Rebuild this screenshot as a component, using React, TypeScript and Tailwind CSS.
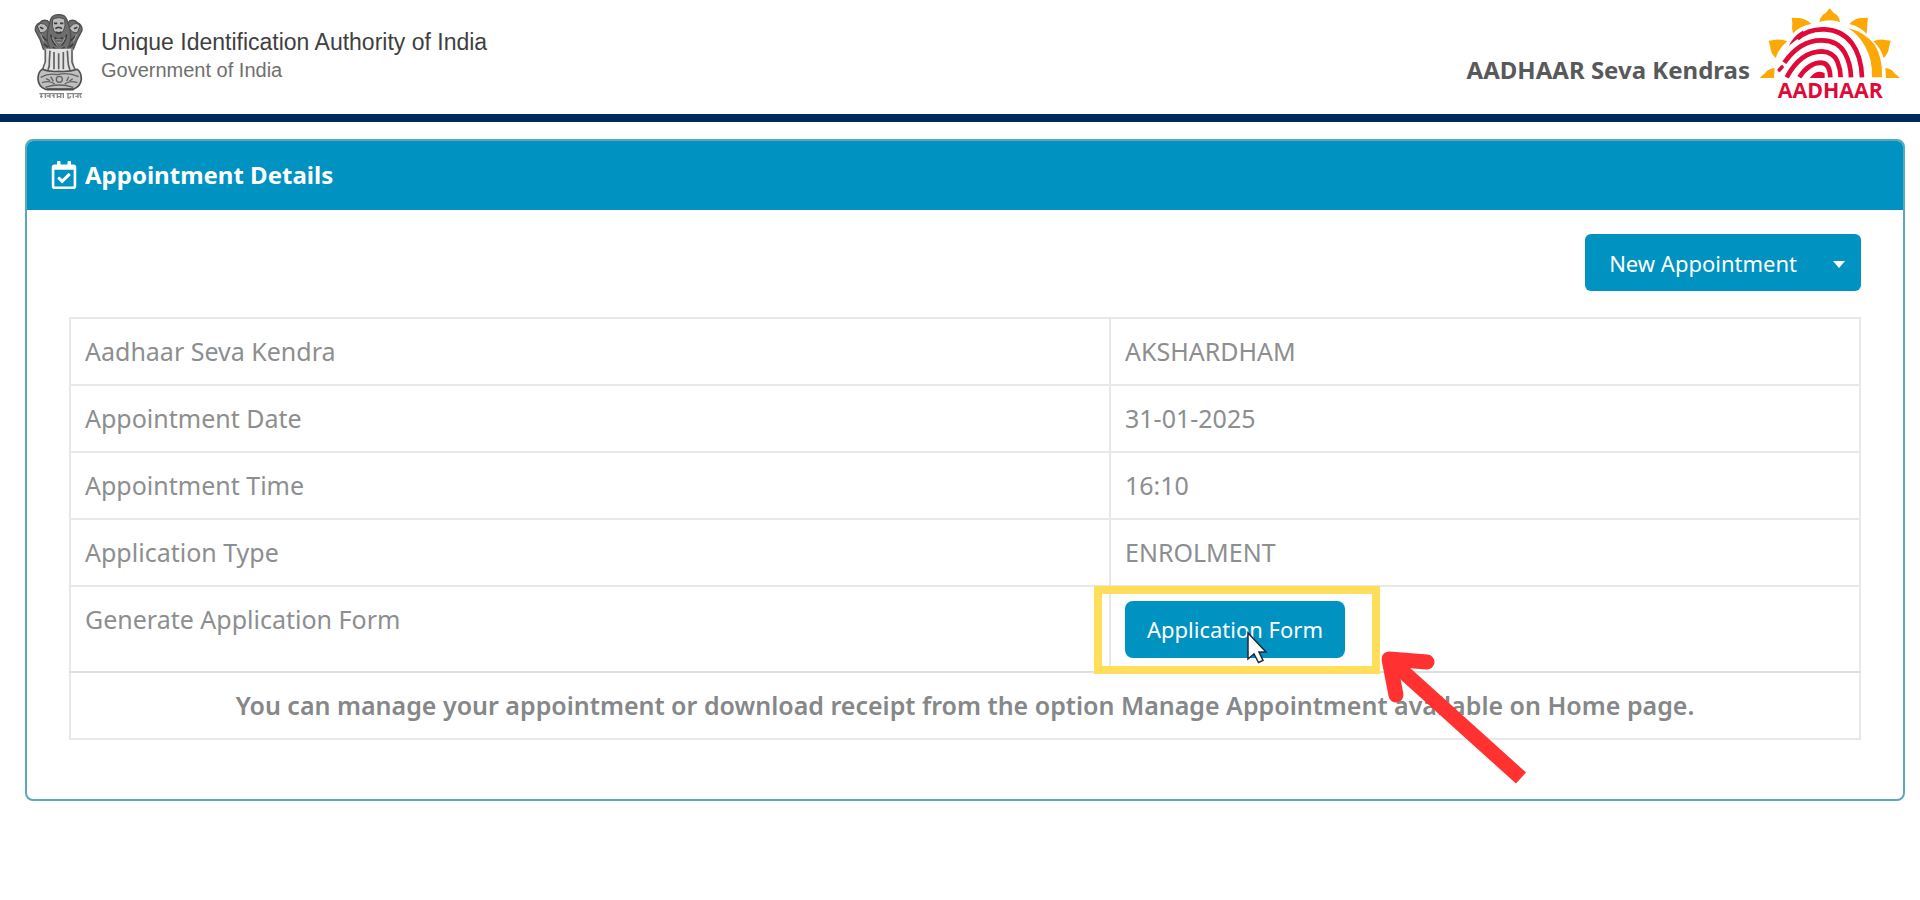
import React from 'react';
import { FaRegCalendarCheck } from 'react-icons/fa';

const DETAILS = [
  { label: 'Aadhaar Seva Kendra', value: 'AKSHARDHAM' },
  { label: 'Appointment Date', value: '31-01-2025' },
  { label: 'Appointment Time', value: '16:10' },
  { label: 'Application Type', value: 'ENROLMENT' },
];

const Emblem: React.FC = () => (
  <svg viewBox="0 0 240 330" className="w-20 h-[110px] shrink-0" role="img" aria-label="State Emblem of India">
    {/* manes */}
    <g fill="#6e6e6e" stroke="#505050" strokeWidth="4">
      <path d="M46 92 Q44 76 60 68 Q66 58 82 62 L96 76 L92 120 L90 154 L70 148 L60 118 Z" />
      <path d="M186 92 Q188 76 172 68 Q166 58 150 62 L138 76 L140 120 L144 154 L160 148 L172 118 Z" />
      <path d="M92 58 Q98 44 116 44 Q136 44 140 58 L150 88 Q158 124 140 150 Q128 162 116 162 Q102 162 92 150 Q76 124 84 88 Z" />
    </g>
    {/* faces */}
    <g fill="#bcbcbc" stroke="#4a4a4a" strokeWidth="3">
      <path d="M52 78 Q60 66 74 72 L84 84 Q76 100 60 98 Z" />
      <path d="M180 78 Q172 66 160 72 L148 84 Q156 100 172 98 Z" />
      <path d="M98 58 Q116 48 134 58 Q138 78 130 94 Q116 104 102 94 Q94 78 98 58 Z" />
    </g>
    <g fill="none" stroke="#3c3c3c" strokeWidth="5">
      <path d="M102 70 h10 M120 70 h10 M106 86 Q116 78 126 86 M108 96 Q116 102 124 96" />
      <path d="M60 82 l10 4 M172 82 l-10 4 M66 108 l14 14 M166 108 l-14 14 M72 132 l12 10 M160 132 l-12 10" />
      <path d="M92 104 Q96 126 108 136 M140 104 Q136 126 124 136 M104 112 Q116 124 128 112 M98 142 Q116 156 134 142" />
    </g>
    <g fill="none" stroke="#c4c4c4" strokeWidth="2">
      <path d="M96 112 q8 18 14 22 M136 112 q-8 18 -14 22 M62 104 l10 20 M170 104 l-10 20 M108 118 h16 M112 128 h10" />
    </g>
    {/* legs */}
    <path d="M74 146 L72 212 L164 212 L158 146 Z" fill="#e4e4e4" />
    <g fill="none" stroke="#606060" strokeWidth="5">
      <path d="M76 148 L76 186 Q70 198 68 210 M90 152 L88 184 Q90 196 84 210 M102 156 L102 208 M116 160 L116 208 M130 156 L130 208 M142 152 L144 184 Q144 196 150 210 M156 148 L156 186 Q160 198 166 210" />
    </g>
    {/* abacus */}
    <path d="M66 208 Q54 216 54 238 Q56 260 76 268 L160 268 Q182 258 184 238 Q184 216 172 208 Q150 216 116 214 Q86 216 66 208 Z" fill="#c0c0c0" stroke="#505050" strokeWidth="5" />
    <g fill="none" stroke="#626262" strokeWidth="4">
      <path d="M62 232 Q86 218 112 224 Q144 216 176 230 M66 248 Q90 240 104 252 M172 248 Q150 240 134 252 M76 262 Q116 248 160 262" />
      <circle cx="118" cy="238" r="9" />
      <path d="M78 236 l12 6 M92 230 l8 14 M146 230 l-6 14 M158 236 l-10 8" />
    </g>
    <path d="M80 268 H160" stroke="#484848" strokeWidth="6" />
    {/* motto */}
    <g fill="none" stroke="#8a8a8a" strokeWidth="4">
      <path d="M58 281 H132 M140 281 H186" />
      <path d="M64 281 v13 M60 289 h8 M76 281 v13 M80 288 h8 M90 281 v13 M102 281 v13 M96 288 q6 -4 6 4 M112 281 v13 M122 281 v13 M114 290 h8 M130 281 v13 M144 281 v13 q6 2 8 -6 M160 281 v13 M166 289 h8 M174 281 v13 M184 281 q-8 4 0 12" />
    </g>
  </svg>
);

const AadhaarLogo: React.FC = () => (
  <svg viewBox="0 0 480 330" className="w-40 h-[110px] shrink-0" role="img" aria-label="Aadhaar">
    {/* sun rays */}
    <g fill="#fca908">
      <path d="M208 66 Q212 46 226 40 L239 25 L252 40 Q268 46 270 66 Q239 56 208 66 Z" />
      <path d="M129 100 Q124 84 127 70 L125 53 L146 54 Q168 56 184 72 Q150 78 129 100 Z" />
      <path d="M350 102 Q352 84 352 70 L354 53 L332 54 Q314 56 298 72 Q330 80 350 102 Z" />
      <path d="M77 174 Q62 160 61 142 L56 122 L78 119 Q98 118 112 124 Q86 144 77 174 Z" />
      <path d="M401 174 Q416 160 417 142 L422 122 L400 119 Q382 118 370 124 Q392 144 401 174 Z" />
      <path d="M72 234 L29 234 L46 218 Q56 206 74 204 Z" />
      <path d="M408 234 L450 234 L432 218 Q424 206 406 204 Z" />
      <path d="M294 84 Q344 96 374 134 Q398 172 396 232 L366 232 Q368 180 346 140 Q326 104 294 84 Z" />
    </g>
    {/* fingerprint ridges */}
    <g fill="none" stroke="#e00a38" strokeWidth="14">
      <path d="M142 116 Q174 86 224 88 Q276 90 306 130 Q334 168 336 232" />
      <path d="M96 201 L88 210" strokeLinecap="round" strokeWidth="11" />
      <path d="M103 188 Q150 120 216 121 Q264 122 284 158 Q302 190 303 232" />
      <path d="M110 232 Q152 154 216 154 Q250 156 262 184 Q272 208 272 232" />
      <path d="M148 232 Q176 188 214 188 Q240 190 241 232" />
      <path d="M188 230 Q202 214 220 222 V230 Z" strokeWidth="8" fill="#e00a38" />
    </g>
    <path d="M116 138 Q130 108 158 92 L168 102 Q138 118 116 138 Z" fill="#e00a38" />
    <text x="241" y="294" textAnchor="middle" fontFamily="'Open Sans', sans-serif" fontWeight="700" fontSize="64" fill="#e00a38">AADHAAR</text>
  </svg>
);

const PointerArrow: React.FC = () => (
  <svg viewBox="0 0 150 140" className="absolute left-[269px] top-[62px] w-[150px] h-[140px] pointer-events-none" aria-hidden="true">
    <g fill="none" stroke="#ff3131" strokeWidth="15" strokeLinejoin="round">
      <path d="M16 46 L9 10 L47 13" strokeLinecap="round" />
      <path d="M9 10 L141 129" />
    </g>
  </svg>
);

const MouseCursor: React.FC = () => (
  <svg viewBox="0 0 22 34" className="absolute left-[135px] top-[44px] w-[22px] h-[34px] pointer-events-none" aria-hidden="true">
    <path d="M2 2 V28 L8 23 L12.500 31.500 L17 29.500 L13 21 H20 Z" fill="#fff" stroke="#1e2a3a" strokeWidth="1.500" />
  </svg>
);

const Header: React.FC = () => (
  <header className="flex items-start justify-between h-[122px] border-b-8 border-[#002a5c] bg-white">
    <div className="flex pl-5">
      <Emblem />
      <div className="pl-px pt-7 font-['Liberation_Sans',Arial,sans-serif]">
        <p className="text-[23px] leading-7 text-[#3f3f3f]">Unique Identification Authority of India</p>
        <p className="text-xl leading-7 text-[#6f6f6f]">Government of India</p>
      </div>
    </div>
    <div className="flex pr-[10px]">
      <p className="pt-[52px] text-2xl leading-9 font-bold text-[#58595b]">AADHAAR Seva Kendras</p>
      <AadhaarLogo />
    </div>
  </header>
);

export default function App() {
  return (
    <div className="min-h-screen bg-white font-['Noto_Sans','Open_Sans',sans-serif] text-[25px] leading-9 text-[#8c8e90]">
      <Header />

      <main className="pl-[25px] pr-[15px] pt-[17px]">
        <section className="rounded-lg border-2 border-[#5aa9b8]">
          <h1 className="flex items-center gap-2 h-[69px] px-6 pb-px bg-[#0092c0] rounded-t-md text-white text-2xl leading-9 font-bold">
            <FaRegCalendarCheck className="w-[26px] h-[28px]" />
            Appointment Details
          </h1>

          <div className="px-[42px] pt-6 pb-[59px]">
            <div className="flex justify-end mb-[26px]">
              <div className="flex h-[57px] rounded-md bg-[#0092c0] text-[22px] text-white">
                <button type="button" className="pl-6 pr-[22px]">New Appointment</button>
                <button type="button" aria-label="More options" className="flex items-center pl-[14px] pr-4 pt-1">
                  <svg viewBox="0 0 12 7" className="w-3 h-[7px]" fill="currentColor" aria-hidden="true">
                    <path d="M0 0 H12 L6 7 Z" />
                  </svg>
                </button>
              </div>
            </div>

            <table className="w-full border-collapse border-2 border-[#e8e8e8]">
              <tbody>
                {DETAILS.map(row => (
                  <tr key={row.label} className="h-[67px] border-b-2 border-[#e8e8e8]">
                    <th scope="row" className="w-[58.1%] px-[14px] pb-0.5 text-left font-normal border-r-2 border-[#e8e8e8]">{row.label}</th>
                    <td className="px-[14px] pb-0.5">{row.value}</td>
                  </tr>
                ))}
                <tr className="h-[86px] border-y-2 border-[#dedede]">
                  <th scope="row" className="px-[14px] pt-[14px] text-left align-top font-normal border-r-2 border-[#e8e8e8]">Generate Application Form</th>
                  <td className="relative px-[14px]">
                    <button type="button" className="block h-[57px] px-[22px] rounded-lg bg-[#0092c0] text-[22px] text-white">Application Form</button>
                    <MouseCursor />
                    <div className="absolute -left-[17px] -top-px w-[286px] h-[88px] border-8 border-[#ffde59] pointer-events-none" />
                    <PointerArrow />
                  </td>
                </tr>
                <tr className="h-[67px]">
                  <td colSpan={2} className="px-[14px] pb-0.5 text-center font-semibold text-[#858789]">
                    You can manage your appointment or download receipt from the option Manage Appointment available on Home page.
                  </td>
                </tr>
              </tbody>
            </table>
          </div>
        </section>
      </main>
    </div>
  );
}
